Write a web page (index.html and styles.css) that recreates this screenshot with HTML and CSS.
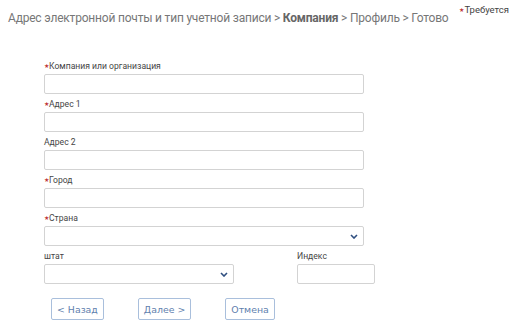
FILE: index.html
```html
<!DOCTYPE html>
<html lang="ru">
<head>
<meta charset="utf-8">
<link rel="stylesheet" href="styles.css">
</head>
<body>
<div class="header">
  <div class="steps">Адрес электронной почты и тип учетной записи &gt; <b>Компания</b> &gt; Профиль &gt; Готово</div>
  <div class="req"><span class="star">★</span>Требуется</div>
</div>
<form class="form">
  <div class="field">
    <label class="label"><span class="star">★</span>Компания или организация</label>
    <div class="input"></div>
  </div>
  <div class="field">
    <label class="label"><span class="star">★</span>Адрес 1</label>
    <div class="input"></div>
  </div>
  <div class="field">
    <label class="label">Адрес 2</label>
    <div class="input"></div>
  </div>
  <div class="field">
    <label class="label"><span class="star">★</span>Город</label>
    <div class="input"></div>
  </div>
  <div class="field">
    <label class="label"><span class="star">★</span>Страна</label>
    <div class="input select">
      <svg width="8" height="5" viewBox="0 0 8 5"><path d="M1 1 L4 4 L7 1" fill="none" stroke="#2f4f80" stroke-width="1.6"/></svg>
    </div>
  </div>
  <div class="row">
    <div class="field">
      <label class="label">штат</label>
      <div class="input select state">
        <svg width="8" height="5" viewBox="0 0 8 5"><path d="M1 1 L4 4 L7 1" fill="none" stroke="#2f4f80" stroke-width="1.6"/></svg>
      </div>
    </div>
    <div class="field">
      <label class="label">Индекс</label>
      <div class="input zip"></div>
    </div>
  </div>
  <div class="buttons">
    <button type="button" class="btn">&lt; Назад</button>
    <button type="button" class="btn">Далее &gt;</button>
    <button type="button" class="btn">Отмена</button>
  </div>
</form>
</body>
</html>
```
FILE: styles.css
```css
html, body { margin: 0; padding: 0; background: #fff; }
body { font-family: Roboto, "Liberation Sans", sans-serif; width: 512px; height: 326px; overflow: hidden; }
.header { display: flex; align-items: flex-start; padding: 0 3px 0 8px; }
.steps { font-size: 12px; letter-spacing: -0.2px; color: #777; margin-top: 11px; line-height: 14px; white-space: nowrap; }
.steps b { color: #666; font-weight: bold; }
.req { margin-left: auto; font-size: 9.5px; color: #444; line-height: 11px; margin-top: 4px; }
.star { color: #c0393b; font-size: 6px; vertical-align: 1px; }
.form { margin: 0; padding: 0 0 0 44px; margin-top: 35px; }
.field { display: flex; flex-direction: column; margin-bottom: 4px; }
.label { font-size: 8.6px; color: #454545; line-height: 12px; margin-bottom: 2px; }
.input { width: 320px; height: 20px; box-sizing: border-box; border: 1px solid #d3d3d3; border-radius: 2px; background: #fff; }
.select { display: flex; align-items: center; justify-content: flex-end; padding-right: 5px; }
.row { display: flex; gap: 63px; }
.state { width: 190px; }
.zip { width: 78px; }
.buttons { display: flex; gap: 34px; margin-left: 7px; margin-top: 10px; }
.btn { font-family: "DejaVu Sans", Verdana, sans-serif; font-size: 9.4px; color: #5f7fae; background: #fff; border: 1px solid #a9bfdc; border-radius: 2px; height: 22px; padding: 0 5px; }
```
